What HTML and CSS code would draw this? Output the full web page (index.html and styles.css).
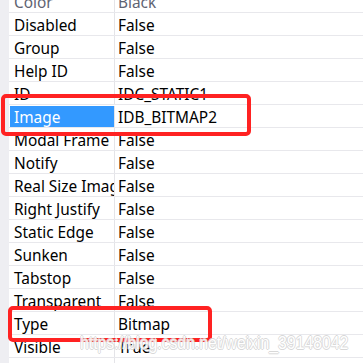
FILE: index.html
```html
<!DOCTYPE html>
<html>
<head>
<meta charset="utf-8">
<link rel="stylesheet" href="styles.css">
</head>
<body>
<div class="panel">
  <div class="strip"></div>
  <div class="grid">
    <div class="row faded"><div class="k">Color</div><div class="v">Black</div></div>
    <div class="row"><div class="k">Disabled</div><div class="v">False</div></div>
    <div class="row"><div class="k">Group</div><div class="v">False</div></div>
    <div class="row"><div class="k">Help ID</div><div class="v">False</div></div>
    <div class="row"><div class="k">ID</div><div class="v">IDC_STATIC1</div></div>
    <div class="row sel"><div class="k">Image</div><div class="v">IDB_BITMAP2</div></div>
    <div class="row"><div class="k">Modal Frame</div><div class="v">False</div></div>
    <div class="row"><div class="k">Notify</div><div class="v">False</div></div>
    <div class="row"><div class="k">Real Size Image</div><div class="v">False</div></div>
    <div class="row"><div class="k">Right Justify</div><div class="v">False</div></div>
    <div class="row"><div class="k">Static Edge</div><div class="v">False</div></div>
    <div class="row"><div class="k">Sunken</div><div class="v">False</div></div>
    <div class="row"><div class="k">Tabstop</div><div class="v">False</div></div>
    <div class="row"><div class="k">Transparent</div><div class="v">False</div></div>
    <div class="row"><div class="k">Type</div><div class="v">Bitmap</div></div>
    <div class="row"><div class="k">Visible</div><div class="v">True</div></div>
    <div class="row"><div class="k"></div><div class="v"></div></div>
  </div>
  <div class="mark mark-image"></div>
  <div class="mark mark-type"></div>
  <div class="watermark">https://blog.csdn.net/weixin_39148042</div>
</div>
</body>
</html>
```
FILE: styles.css
```css
html, body {
  margin: 0;
  padding: 0;
  background: #ffffff;
}
body {
  width: 363px;
  height: 363px;
  overflow: hidden;
  font-family: "Noto Sans", "Open Sans", sans-serif;
  font-size: 15.4px;
  color: #000000;
}
.panel {
  position: relative;
  display: flex;
  width: 363px;
  height: 363px;
  overflow: hidden;
}
.strip {
  width: 9px;
  flex: none;
  background: #eeeef2;
}
.grid {
  flex: 1;
  display: flex;
  flex-direction: column;
  margin-top: -10px;
}
.row {
  display: grid;
  grid-template-columns: 106px 1fr;
  height: 23px;
  box-sizing: border-box;
  border-bottom: 1px solid #e8e8ec;
  flex: none;
}
.k, .v {
  line-height: 21px;
  white-space: nowrap;
  overflow: hidden;
  padding-top: 2px;
  box-sizing: border-box;
  height: 22px;
}
.k {
  padding-left: 5px;
  border-right: 1px solid #e4e4e8;
}
.v {
  padding-left: 3px;
}
.faded .k, .faded .v {
  color: #5e6372;
}
.sel .k {
  background: #3399ff;
  color: #ffffff;
  margin: 1px 0 0 1px;
  height: 21px;
  padding-top: 1px;
  padding-left: 4px;
}
.mark {
  position: absolute;
  border: 4px solid #ff2222;
  border-radius: 5px;
  box-sizing: border-box;
}
.mark-image {
  left: 1px;
  top: 94px;
  width: 250px;
  height: 42px;
}
.mark-type {
  left: 8px;
  top: 306px;
  width: 204px;
  height: 36px;
}
.watermark {
  position: absolute;
  left: 80px;
  top: 332px;
  font-family: "Liberation Sans", Arial, sans-serif;
  font-size: 19px;
  color: #ffffff;
  transform: scaleX(0.83);
  transform-origin: 0 0;
  text-shadow: 1px 0 0 #d4d4d4, -1px 0 0 #d4d4d4, 0 1px 0 #d4d4d4, 0 -1px 0 #d4d4d4;
  white-space: nowrap;
  opacity: 0.9;
}
```
